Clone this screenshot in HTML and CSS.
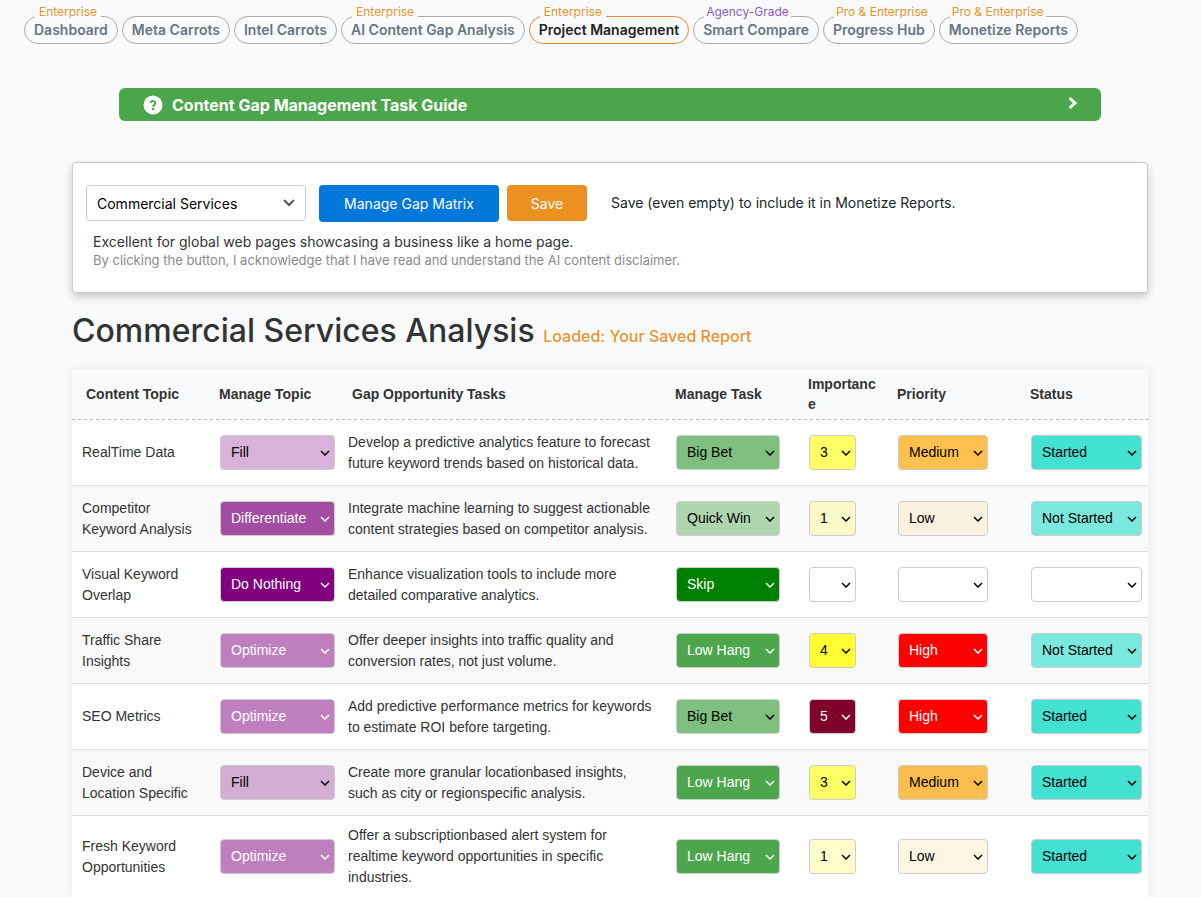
FILE: index.html
```html
<!DOCTYPE html>
<html lang="en">
<head>
<meta charset="utf-8">
<meta name="viewport" content="width=device-width, initial-scale=1">
<title>Project Management</title>
<link rel="stylesheet" href="styles.css">
</head>
<body>
<nav class="tabs" aria-label="Tools">
  <a class="tab" href="#dashboard"><span class="tier">Enterprise</span>Dashboard</a>
  <a class="tab" href="#meta">Meta Carrots</a>
  <a class="tab" href="#intel">Intel Carrots</a>
  <a class="tab" href="#gap"><span class="tier">Enterprise</span>AI Content Gap Analysis</a>
  <a class="tab tab-active" href="#project" aria-current="page"><span class="tier">Enterprise</span>Project Management</a>
  <a class="tab" href="#compare"><span class="tier tier-wide tier-agency">Agency-Grade</span>Smart Compare</a>
  <a class="tab" href="#progress"><span class="tier tier-wide">Pro &amp; Enterprise</span>Progress Hub</a>
  <a class="tab" href="#monetize"><span class="tier tier-wide">Pro &amp; Enterprise</span>Monetize Reports</a>
</nav>
<main class="content">
  <button class="guide" type="button">
    <svg class="guide-help" viewBox="0 0 20 20" aria-hidden="true"><circle cx="10" cy="10" r="9.5" fill="#fff"/><path d="M7.6 8.1C7.6 5.3 12.5 5.5 12.4 8.1C12.4 9.8 10.1 9.6 10.1 11.7" fill="none" stroke="#4ba64b" stroke-width="1.9"/><circle cx="10.1" cy="14" r="1.25" fill="#4ba64b"/></svg>
    <span class="guide-title">Content Gap Management Task Guide</span>
    <svg class="guide-arrow" viewBox="0 0 12 14" aria-hidden="true"><path d="M2.5 2L8 7L2.5 12" fill="none" stroke="#fff" stroke-width="3"/></svg>
  </button>

  <section class="card">
    <div class="controls">
      <div class="picker">
        <select class="picker-select" aria-label="Report type"><option>Commercial Services</option></select>
        <svg class="picker-arrow" viewBox="0 0 12 8" aria-hidden="true"><path d="M1 1L6 6L11 1" fill="none" stroke="#555" stroke-width="2"/></svg>
      </div>
      <button class="btn btn-manage" type="button">Manage Gap Matrix</button>
      <button class="btn btn-save" type="button">Save</button>
      <span class="save-note">Save (even empty) to include it in Monetize Reports.</span>
    </div>
    <p class="hint">Excellent for global web pages showcasing a business like a home page.</p>
    <p class="hint hint-muted">By clicking the button, I acknowledge that I have read and understand the AI content disclaimer.</p>
  </section>

  <h1 class="title">Commercial Services Analysis <span class="loaded">Loaded: Your Saved Report</span></h1>

  <table class="matrix">
    <colgroup><col class="c-std"><col class="c-std"><col class="c-task"><col class="c-std"><col class="c-small"><col class="c-std"><col class="c-last"></colgroup>
    <thead>
      <tr><th scope="col">Content Topic</th><th scope="col">Manage Topic</th><th scope="col">Gap Opportunity Tasks</th><th scope="col">Manage Task</th><th scope="col">Importance</th><th scope="col">Priority</th><th scope="col">Status</th></tr>
    </thead>
    <tbody>
      <tr>
        <td>RealTime Data</td>
        <td class="pick"><select class="s-topic fill" aria-label="Manage topic"><option>Fill</option></select></td>
        <td>Develop a predictive analytics feature to forecast future keyword trends based on historical data.</td>
        <td class="pick"><select class="s-task bigbet" aria-label="Manage task"><option>Big Bet</option></select></td>
        <td class="pick"><select class="s-imp imp3" aria-label="Importance"><option>3</option></select></td>
        <td class="pick"><select class="s-pri medium" aria-label="Priority"><option>Medium</option></select></td>
        <td class="pick"><select class="s-status started" aria-label="Status"><option>Started</option></select></td>
      </tr>
      <tr>
        <td>Competitor Keyword Analysis</td>
        <td class="pick"><select class="s-topic differentiate" aria-label="Manage topic"><option>Differentiate</option></select></td>
        <td>Integrate machine learning to suggest actionable content strategies based on competitor analysis.</td>
        <td class="pick"><select class="s-task quickwin" aria-label="Manage task"><option>Quick Win</option></select></td>
        <td class="pick"><select class="s-imp imp1" aria-label="Importance"><option>1</option></select></td>
        <td class="pick"><select class="s-pri low" aria-label="Priority"><option>Low</option></select></td>
        <td class="pick"><select class="s-status notstarted" aria-label="Status"><option>Not Started</option></select></td>
      </tr>
      <tr>
        <td>Visual Keyword Overlap</td>
        <td class="pick"><select class="s-topic nothing" aria-label="Manage topic"><option>Do Nothing</option></select></td>
        <td>Enhance visualization tools to include more detailed comparative analytics.</td>
        <td class="pick"><select class="s-task skip" aria-label="Manage task"><option>Skip</option></select></td>
        <td class="pick"><select class="s-imp" aria-label="Importance"><option></option></select></td>
        <td class="pick"><select class="s-pri" aria-label="Priority"><option></option></select></td>
        <td class="pick"><select class="s-status" aria-label="Status"><option></option></select></td>
      </tr>
      <tr>
        <td>Traffic Share Insights</td>
        <td class="pick"><select class="s-topic optimize" aria-label="Manage topic"><option>Optimize</option></select></td>
        <td>Offer deeper insights into traffic quality and conversion rates, not just volume.</td>
        <td class="pick"><select class="s-task lowhang" aria-label="Manage task"><option>Low Hang</option></select></td>
        <td class="pick"><select class="s-imp imp4" aria-label="Importance"><option>4</option></select></td>
        <td class="pick"><select class="s-pri high" aria-label="Priority"><option>High</option></select></td>
        <td class="pick"><select class="s-status notstarted" aria-label="Status"><option>Not Started</option></select></td>
      </tr>
      <tr>
        <td>SEO Metrics</td>
        <td class="pick"><select class="s-topic optimize" aria-label="Manage topic"><option>Optimize</option></select></td>
        <td>Add predictive performance metrics for keywords to estimate ROI before targeting.</td>
        <td class="pick"><select class="s-task bigbet" aria-label="Manage task"><option>Big Bet</option></select></td>
        <td class="pick"><select class="s-imp imp5" aria-label="Importance"><option>5</option></select></td>
        <td class="pick"><select class="s-pri high" aria-label="Priority"><option>High</option></select></td>
        <td class="pick"><select class="s-status started" aria-label="Status"><option>Started</option></select></td>
      </tr>
      <tr>
        <td>Device and Location Specific</td>
        <td class="pick"><select class="s-topic fill" aria-label="Manage topic"><option>Fill</option></select></td>
        <td>Create more granular locationbased insights, such as city or regionspecific analysis.</td>
        <td class="pick"><select class="s-task lowhang" aria-label="Manage task"><option>Low Hang</option></select></td>
        <td class="pick"><select class="s-imp imp3" aria-label="Importance"><option>3</option></select></td>
        <td class="pick"><select class="s-pri medium" aria-label="Priority"><option>Medium</option></select></td>
        <td class="pick"><select class="s-status started" aria-label="Status"><option>Started</option></select></td>
      </tr>
      <tr>
        <td>Fresh Keyword Opportunities</td>
        <td class="pick"><select class="s-topic optimize" aria-label="Manage topic"><option>Optimize</option></select></td>
        <td>Offer a subscriptionbased alert system for realtime keyword opportunities in specific industries.</td>
        <td class="pick"><select class="s-task lowhang" aria-label="Manage task"><option>Low Hang</option></select></td>
        <td class="pick"><select class="s-imp imp1" aria-label="Importance"><option>1</option></select></td>
        <td class="pick"><select class="s-pri low" aria-label="Priority"><option>Low</option></select></td>
        <td class="pick"><select class="s-status started" aria-label="Status"><option>Started</option></select></td>
      </tr>
    </tbody>
  </table>
</main>
</body>
</html>
```
FILE: styles.css
```css
* { box-sizing: border-box; }
html { scrollbar-width: none; }
body {
  margin: 0;
  background: #f9fafc;
  color: #333;
  font-family: Inter, "Liberation Sans", sans-serif;
  font-size: 14px;
}
button, select { font: inherit; }

/* Tabs */
.tabs { display: flex; gap: 4px; padding: 16px 24px 0; }
.tab {
  position: relative;
  padding: 0 9px;
  border: 1px solid #b0a8ab;
  border-radius: 14px;
  color: #6c757d;
  font-weight: 600;
  line-height: 26px;
  text-decoration: none;
  white-space: nowrap;
}
.tab-active { border-color: #f0883a; color: #222; }
.tier {
  position: absolute;
  top: -13px;
  left: 10px;
  padding: 0 4px;
  background: #f9fafc;
  color: #e8952e;
  font-size: 12px;
  font-weight: 400;
  line-height: 16px;
}
.tier-wide { padding: 0 2px; }
.tier-agency { color: #8e5bb5; }

.content { padding: 44px 53px 0 72px; }

/* Guide bar */
.guide {
  display: flex;
  align-items: center;
  width: calc(100% - 94px);
  height: 33px;
  margin: 0 47px;
  padding: 0 22px 0 24px;
  border: 0;
  border-radius: 6px;
  background: #4ba64b;
  color: #fff;
  font-size: 16px;
  font-weight: 700;
  text-align: left;
}
.guide-help { width: 20px; height: 20px; margin-right: 9px; }
.guide-title { flex: 1; }
.guide-arrow { width: 12px; height: 14px; margin-bottom: 4px; }

/* Settings card */
.card {
  margin-top: 41px;
  padding: 22px 13px;
  border: 1px solid #c9cbd0;
  border-radius: 4px;
  background: #fff;
  box-shadow: 0 4px 8px rgba(0, 0, 0, 0.2);
}
.controls { display: flex; align-items: flex-start; margin-bottom: 10px; }
.picker { display: grid; align-items: center; width: 220px; margin-right: 13px; }
.picker-select, .picker-arrow { grid-area: 1 / 1; }
.picker-select {
  appearance: none;
  width: 100%;
  height: 36px;
  padding: 0 10px;
  border: 1px solid #ccc;
  border-radius: 4px;
  background: #fff;
  color: #000;
}
.picker-arrow { justify-self: end; width: 12px; height: 8px; margin-right: 11px; pointer-events: none; }
.btn { border: 0; border-radius: 4px; color: #fff; }
.btn-manage { width: 180px; height: 37px; margin-right: 8px; background: #0078d9; }
.btn-save { width: 80px; height: 36px; margin-right: 24px; background: #ec9121; }
.save-note { line-height: 36px; color: #212529; }
.hint { margin: 0 7px; line-height: 19px; }
.hint-muted { color: #8a8a8a; font-size: 13px; }

/* Heading */
.title { margin: 17px 0 18px; font-size: 32px; font-weight: 500; line-height: 41px; }
.loaded { color: #e8952e; font-size: 16px; line-height: 20px; }

/* Gap matrix */
.matrix {
  width: 100%;
  table-layout: fixed;
  border-collapse: collapse;
  background: #fff;
  box-shadow: 0 0 10px rgba(0, 0, 0, 0.08);
  font-family: "Liberation Sans", Arial, sans-serif;
  line-height: 21px;
}
.c-std { width: 133px; }
.c-task { width: 323px; }
.c-small { width: 89px; }
.c-last { width: 132px; }
thead tr {
  background-color: #f9fafc;
  background-image: repeating-linear-gradient(to right, #b5b8bc 0 3px, transparent 3px 6px);
  background-position: bottom;
  background-size: 100% 1px;
  background-repeat: no-repeat;
}
th {
  padding: 5px 5px 6px 14px;
  line-height: 20px;
  text-align: left;
  overflow-wrap: anywhere;
}
td { padding: 9px 5px 9px 10px; border-bottom: 1px solid #ddd; overflow-wrap: break-word; }
tbody tr:nth-child(even) { background: #f9f9f9; }
.pick { padding: 15px 0 15px 15px; }
.pick select {
  appearance: none;
  display: block;
  height: 35px;
  padding: 0 10px;
  border: 1px solid #ccc;
  border-radius: 4px;
  background-color: #fff;
  background-image: url("data:image/svg+xml,%3Csvg xmlns='http://www.w3.org/2000/svg' width='10' height='6' viewBox='0 0 10 6'%3E%3Cpath d='M1 1L5 5L9 1' fill='none' stroke='black' stroke-width='1.5'/%3E%3C/svg%3E");
  background-position: right 4px center;
  background-repeat: no-repeat;
  color: #000;
}
.s-topic { width: 115px; }
.s-task { width: 104px; }
.s-imp { width: 47px; }
.s-pri { width: 90px; }
.s-status { width: 111px; }

.pick .optimize, .pick .differentiate, .pick .nothing, .pick .lowhang,
.pick .skip, .pick .imp5, .pick .high {
  background-image: url("data:image/svg+xml,%3Csvg xmlns='http://www.w3.org/2000/svg' width='10' height='6' viewBox='0 0 10 6'%3E%3Cpath d='M1 1L5 5L9 1' fill='none' stroke='white' stroke-width='1.5'/%3E%3C/svg%3E");
  color: #fff;
}
.pick .fill { background-color: #d8b2d8; }
.pick .optimize { background-color: #bf7fbf; }
.pick .differentiate { background-color: #a24ca2; }
.pick .nothing { background-color: #800080; }
.pick .bigbet { background-color: #7fbf7f; }
.pick .quickwin { background-color: #afd5af; }
.pick .lowhang { background-color: #4ca64c; }
.pick .skip { background-color: #008000; }
.pick .imp1 { background-color: #ffffcc; }
.pick .imp3 { background-color: #ffff66; }
.pick .imp4 { background-color: #ffff33; }
.pick .imp5 { background-color: #800029; }
.pick .low { background-color: #fff5e5; }
.pick .medium { background-color: #ffc04d; }
.pick .high { background-color: #ff0000; }
.pick .notstarted { background-color: #7ae8dd; }
.pick .started { background-color: #43e1d1; }
tr:nth-child(even) .fill { background-color: #d3aed3; }
tr:nth-child(even) .imp1 { background-color: #faf9c8; }
tr:nth-child(even) .low { background-color: #faf0e0; }
tr:nth-child(even) .medium { background-color: #fcbd4f; }
```
